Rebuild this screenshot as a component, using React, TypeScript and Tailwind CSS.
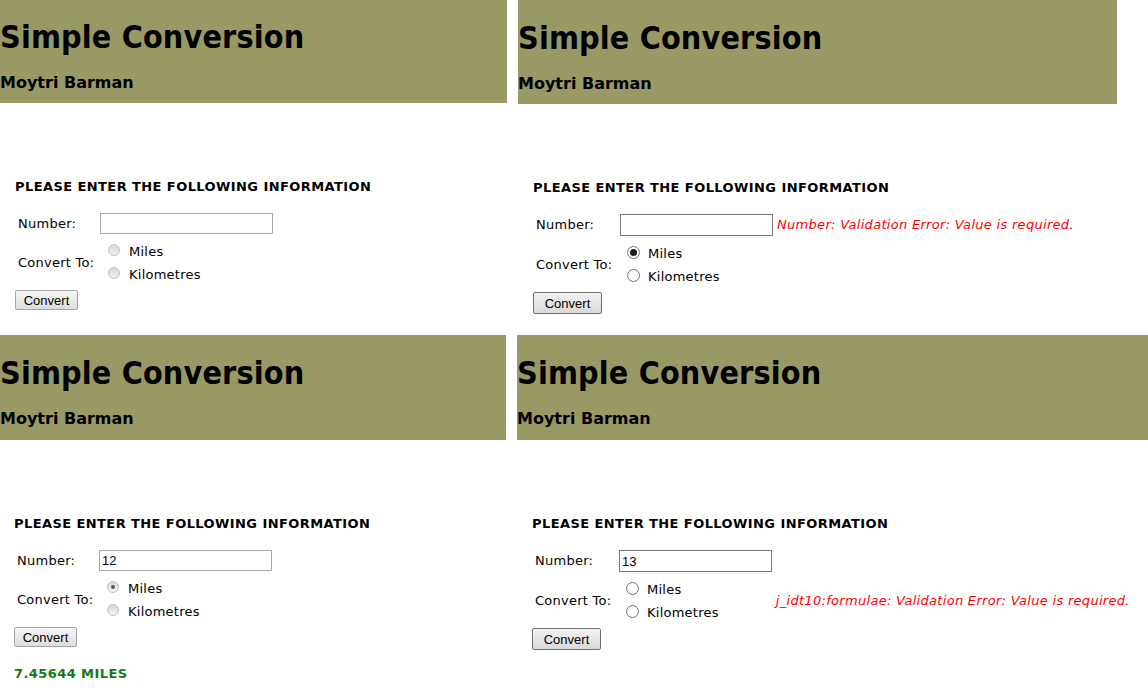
type Look = 'ie' | 'chrome';

type PanelProps = {
  look: Look;
  width: string;
  headerH: string;
  headerPt: string;
  padL?: string;
  value?: string;
  checked?: 'miles' | 'km';
  numberError?: string;
  radioError?: string;
  result?: string;
};

const font = "font-['Verdana','DejaVu_Sans',sans-serif]";

const Radio = ({ look, checked }: { look: Look; checked?: boolean }) => {
  if (look === 'ie') {
    return (
      <span className="flex h-[12px] w-[12px] items-center justify-center rounded-full border border-[#c2c2c2] bg-gradient-to-b from-[#d6d6d6] to-[#f3f3f3]">
        {checked && <span className="h-[4px] w-[4px] rounded-full bg-[#5a5a5a]" />}
      </span>
    );
  }
  return (
    <span className="flex h-[13px] w-[13px] items-center justify-center rounded-full border border-[#6f6f6f] bg-white">
      {checked && <span className="h-[7px] w-[7px] rounded-full bg-[#1a1a1a]" />}
    </span>
  );
};

const Panel = ({ look, width, headerH, headerPt, padL, value, checked, numberError, radioError, result }: PanelProps) => {
  const ie = look === 'ie';
  return (
    <div className={`${width} ${font} text-black`}>
      <header className={`${headerH} ${headerPt} bg-[#999966]`}>
        <h1 className="font-['DejaVu_Sans_Condensed','DejaVu_Sans',sans-serif] text-[32px] font-bold leading-[40px] tracking-[0.15px]">Simple Conversion</h1>
        <h3 className="mt-[16px] text-[16px] font-bold leading-[20px]">Moytri Barman</h3>
      </header>

      <div className={`${padL ?? 'pl-[15px]'} pt-[76px] text-[13px] tracking-[0.25px]`}>
        <h4 className="font-bold leading-[16px] tracking-[0.42px]">PLEASE ENTER THE FOLLOWING INFORMATION</h4>

        <div className={`${ie ? 'mt-[18px] h-[21px]' : 'mt-[18px] h-[22px]'} flex items-center`}>
          <span className="w-[85px] pl-[3px]">Number:</span>
          <input
            readOnly
            value={value ?? ''}
            className={`${ie ? 'w-[173px] border-[#a9a9a9]' : 'ml-[2px] w-[153px] border-[#767676]'} h-full border bg-white px-[2px] font-['Liberation_Sans',Arial,sans-serif] text-[13px] tracking-normal outline-none`}
          />
          {numberError && <span className="ml-[4px] italic tracking-[0.3px] text-[#ff0000]">{numberError}</span>}
        </div>

        <div className="mt-[6px] flex items-center">
          <span className="w-[85px] pl-[3px]">Convert To:</span>
          <div className="flex flex-col">
            <label className={`${ie ? 'gap-[9px] pl-[8px]' : 'gap-[8px] pl-[9px]'} flex h-[23px] items-center`}>
              <span className="-mt-[3px]"><Radio look={look} checked={checked === 'miles'} /></span>
              <span>Miles</span>
            </label>
            <label className={`${ie ? 'gap-[9px] pl-[8px]' : 'gap-[8px] pl-[9px]'} flex h-[23px] items-center`}>
              <span className="-mt-[3px]"><Radio look={look} checked={checked === 'km'} /></span>
              <span>Kilometres</span>
            </label>
          </div>
          {radioError && <span className="ml-[57px] italic tracking-[0.3px] text-[#ff0000]">{radioError}</span>}
        </div>

        <button
          className={`${ie ? 'mt-[4px] h-[20px] w-[63px] border-[#a6a6a6] bg-gradient-to-b from-[#f6f6f6] to-[#dddddd]' : 'mt-[4px] h-[22px] w-[69px] border-[#707070] bg-gradient-to-b from-[#f2f2f2] to-[#d9d9d9]'} block rounded-[2px] border font-['Liberation_Sans',Arial,sans-serif] text-[13px] leading-none tracking-normal text-black`}
        >
          Convert
        </button>

        {result && <p className="mt-[19px] font-bold leading-[16px] tracking-[0.42px] text-[#107c10]">{result}</p>}
      </div>
    </div>
  );
};

export default function App() {
  return (
    <div className="h-[695px] w-[1148px] overflow-hidden bg-white">
      <div className="flex h-[335px] gap-[11px]">
        <Panel look="ie" width="w-[507px]" headerH="h-[103px]" headerPt="pt-[17px]" />
        <Panel
          look="chrome"
          width="w-[599px]"
          headerH="h-[104px]"
          headerPt="pt-[18px]"
          checked="miles"
          numberError="Number: Validation Error: Value is required."
        />
      </div>
      <div className="flex gap-[11px]">
        <Panel
          look="ie"
          width="w-[506px]"
          headerH="h-[105px]"
          headerPt="pt-[18px]"
          padL="pl-[14px]"
          value="12"
          checked="miles"
          result="7.45644 MILES"
        />
        <Panel
          look="chrome"
          width="w-[631px]"
          headerH="h-[105px]"
          headerPt="pt-[18px]"
          value="13"
          radioError="j_idt10:formulae: Validation Error: Value is required."
        />
      </div>
    </div>
  );
}
